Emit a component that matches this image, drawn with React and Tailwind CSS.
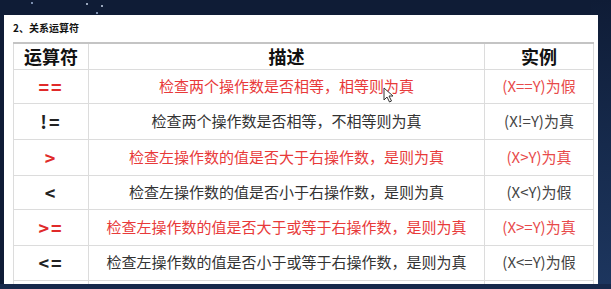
const rows = [
  { op: '==', desc: '检查两个操作数是否相等，相等则为真', ex: '(X==Y)为假', red: true, h: 'h-[34px]' },
  { op: '!=', desc: '检查两个操作数是否相等，不相等则为真', ex: '(X!=Y)为真', red: false, h: 'h-[36px]' },
  { op: '>', desc: '检查左操作数的值是否大于右操作数，是则为真', ex: '(X>Y)为真', red: true, h: 'h-[36px]' },
  { op: '<', desc: '检查左操作数的值是否小于右操作数，是则为真', ex: '(X<Y)为假', red: false, h: 'h-[34px]' },
  { op: '>=', desc: '检查左操作数的值是否大于或等于右操作数，是则为真', ex: '(X>=Y)为真', red: true, h: 'h-[36px]' },
  { op: '<=', desc: '检查左操作数的值是否小于或等于右操作数，是则为真', ex: '(X<=Y)为假', red: false, h: 'h-[35px]' },
];

function Cursor() {
  return (
    <svg className="absolute left-[379px] top-[72px]" width="12" height="16" viewBox="0 0 12 16">
      <path d="M1 1 L1 13 L4 10 L6.5 15 L8.5 14 L6 9 L10 9 Z" fill="#fff" stroke="#333" strokeWidth="1" strokeLinejoin="round" />
    </svg>
  );
}

export default function App() {
  return (
    <div className="relative w-[611px] h-[289px] overflow-hidden bg-[#0f1c36] font-['Noto_Sans_CJK_SC','Noto_Sans',sans-serif]">
      {/* stars */}
      <span className="absolute left-[31px] top-[2px] w-[2px] h-[2px] rounded-full bg-[#9fb3d6]" />
      <span className="absolute left-[86px] top-[3px] w-[2px] h-[2px] rounded-full bg-[#c8d4ea]" />
      <span className="absolute left-[101px] top-[5px] w-[2px] h-[2px] rounded-full bg-[#c8d4ea]" />
      <span className="absolute left-[96px] top-[12px] w-[2px] h-[2px] rounded-full bg-[#9fb3d6]" />
      <div className="absolute right-0 top-0 w-[20px] h-[289px] bg-gradient-to-b from-[#0f1c36] via-[#162a4c] to-[#1d365f]" />
      <div className="absolute left-0 bottom-0 w-[611px] h-[5px] bg-[#17294b]" />

      <div className="relative ml-[4px] mt-[15px] w-[594px] h-[269px] bg-white overflow-hidden">
        <div className="pl-[9px] pt-[6px] h-[27px] text-[10px] font-bold text-[#111] leading-[14px]">2、关系运算符</div>
        <table className="ml-[9px] w-[580px] table-fixed border-collapse">
          <colgroup>
            <col className="w-[75px]" />
            <col className="w-[396px]" />
            <col className="w-[109px]" />
          </colgroup>
          <thead>
            <tr className="h-[26px] border-t-2 border-[#c4c4c4]">
              <th className="border-x border-b border-[#dcdcdc] text-[18px] font-bold text-[#111] leading-none">运算符</th>
              <th className="border-x border-b border-[#dcdcdc] text-[18px] font-bold text-[#111] leading-none">描述</th>
              <th className="border-x border-b border-[#dcdcdc] text-[18px] font-bold text-[#111] leading-none">实例</th>
            </tr>
          </thead>
          <tbody>
            {rows.map((r) => (
              <tr key={r.op} className={r.h}>
                <td className={`border border-[#dcdcdc] text-center text-[18px] font-bold tracking-[2px] ${r.red ? 'text-[#e02a2a]' : 'text-[#222]'}`}>{r.op}</td>
                <td className={`border border-[#dcdcdc] text-center text-[15px] ${r.red ? 'text-[#e83a3a]' : 'text-[#333]'}`}>{r.desc}</td>
                <td className={`border border-[#dcdcdc] text-center text-[15px] ${r.red ? 'text-[#e84a4a]' : 'text-[#444]'}`}>{r.ex}</td>
              </tr>
            ))}
            <tr className="h-[10px]">
              <td className="border border-[#dcdcdc]" />
              <td className="border border-[#dcdcdc]" />
              <td className="border border-[#dcdcdc]" />
            </tr>
          </tbody>
        </table>
        <Cursor />
      </div>
    </div>
  );
}
